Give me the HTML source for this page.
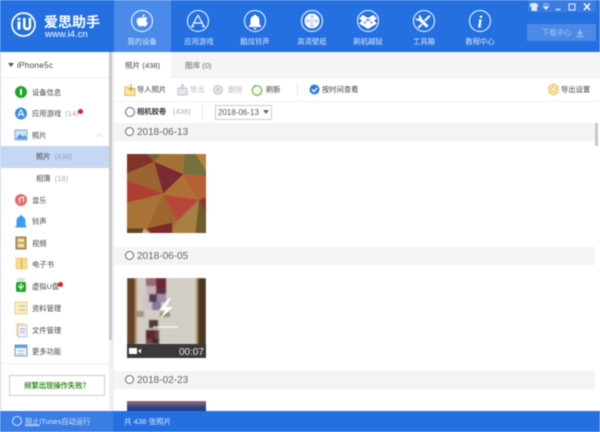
<!DOCTYPE html>
<html><head><meta charset="utf-8">
<style>
*{box-sizing:border-box}
html,body{margin:0;padding:0}
body{width:600px;height:432px;overflow:hidden;position:relative;background:#fff;font-family:"Liberation Sans","Noto Sans CJK SC",sans-serif;color:#555}
#w{position:absolute;left:0;top:0;width:600px;height:432px;overflow:hidden;filter:blur(.4px)}
#w div,#w svg{position:absolute}
.n{width:56px;text-align:center;top:35px;font-size:7.3px;line-height:13px;color:#dbe8fc;white-space:nowrap}
.c{width:22px;height:22px;top:10px;border:1.3px solid #fff;border-radius:50%}
.s{left:32px;font-size:7.3px;line-height:14px;margin-top:1px;color:#444;white-space:nowrap}
.s i{font-style:normal;color:#aaa;margin-left:4px;font-size:7.6px}
.b{font-size:7.3px;line-height:14px;top:83px;color:#444;white-space:nowrap}
.d{left:114px;width:481px;height:18px;background:#f4f4f4}
.dt{left:137px;font-size:10px;line-height:18px;color:#666}
.r{left:125px;width:9px;height:9px;border:1px solid #666;border-radius:50%;background:#fff}
</style></head><body><div id="w">
<div style="left:0;top:0;width:600px;height:52px;background:#2470e0"></div>
<div style="left:114px;top:0;width:57px;height:52px;background:#4a8ae8"></div>

<svg style="left:9px;top:10px" width="30" height="30" viewBox="0 0 30 30"><circle cx="14.500" cy="14.500" r="11.500" fill="none" stroke="#fff" stroke-width="1.700"/><path d="M8.500 11.500h3v8h-3zM8.500 8h3v2.300h-3zM14 8h2.500v8q0 1.700 1.600 1.700t1.600-1.700V8h2.500v8q0 4.300-4.100 4.300T14 16z" fill="#fff"/></svg>
<div style="left:44px;top:14px;font-size:14px;line-height:17px;font-weight:bold;color:#fff;white-space:nowrap">爱思助手</div>
<div style="left:45px;top:29px;font-size:9.500px;line-height:11px;color:#fff">www.i4.cn</div>

<div class="c" style="left:131px"></div><div class="c" style="left:187px"></div><div class="c" style="left:244px"></div><div class="c" style="left:301px"></div><div class="c" style="left:357px"></div><div class="c" style="left:413px"></div><div class="c" style="left:469px"></div>
<svg style="left:131px;top:10px" width="360" height="23" viewBox="0 0 360 23">
<path d="M11.300 7.800c1-.1 1.800-.7 2.700-.7 1 0 1.900.5 2.400 1.200-1.800 1.200-1.500 3.700.4 4.600-.5 1.400-1.700 3.600-3 3.600-.9 0-1.300-.6-2.400-.6s-1.500.6-2.400.6c-1.500 0-3.300-3-3.300-5.300 0-2.500 1.700-3.600 3.100-3.600.9 0 1.700.2 2.500.2zM11.200 7.200c0-1.500 1-2.700 2.500-2.900.1 1.600-1 2.800-2.500 2.900z" fill="#fff"/>
<path d="M67 5L61 16.500M67 5L73 16.500M62 13h10M60 16.500h3M71 16.500h3" fill="none" stroke="#fff" stroke-width="1.200"/>
<path d="M124 4.500q1 0 1.200 1.300 3.300.8 3.300 5v3.200l1.500 2v1h-12v-1l1.500-2v-3.200q0-4.200 3.300-5 .2-1.300 1.200-1.300zM122.300 18h3.400q-.4 1.500-1.700 1.500t-1.700-1.500z" fill="#fff"/>
<circle cx="181" cy="11" r="7.500" fill="#fff"/><circle cx="181" cy="11" r="2.800" fill="#dbe7fa"/><circle cx="181" cy="6.500" r="2" fill="#c6d9f7"/><circle cx="181" cy="15.500" r="2" fill="#c6d9f7"/><circle cx="176.500" cy="11" r="2" fill="#c6d9f7"/><circle cx="185.500" cy="11" r="2" fill="#c6d9f7"/>
<path d="M232 5l5 3 5-3 4 3.500-3 2 3 3-9 5.500-9-5.500 3-3-3-2z" fill="#fff"/><path d="M233 12.500h2M239.500 12.500h2M235 10h4" stroke="#2470e0" stroke-width="1.200"/>
<path d="M287.500 5q3 .5 3 3.200l7 7.500-2 2-7.500-7q-3.300.3-3.500-3l2 1.500 2-1.500zM298 5l-5 5 1.500 1.500 5-5zM291 13l-4.500 4 1.500 1.500 4-4.500z" fill="#fff"/>
<text x="349" y="17.500" font-family="Liberation Serif" font-style="italic" font-weight="bold" font-size="17" fill="#fff" text-anchor="middle">i</text>
</svg>
<div class="n" style="left:114px">我的设备</div><div class="n" style="left:171px">应用游戏</div><div class="n" style="left:227px">酷炫铃声</div><div class="n" style="left:284px">高清壁纸</div><div class="n" style="left:340px">刷机越狱</div><div class="n" style="left:396px">工具箱</div><div class="n" style="left:452px">教程中心</div>

<div style="left:528px;top:0;width:68px;height:12px;background:#3a7ce2"></div>
<svg style="left:528px;top:1px" width="68" height="12" viewBox="0 0 68 12"><path d="M2 3l2-1h3.500l2 1 1 2-1.500 1v4H3.500V6L1.500 5z" fill="#dce8fb"/><path d="M15 3h6M15.500 5.500h5L18 8.500z" stroke="#dce8fb" stroke-width=".8" fill="#dce8fb"/><path d="M27.500 8.500h5" stroke="#dce8fb" stroke-width="1.400"/><rect x="41" y="3" width="6" height="6" fill="none" stroke="#dce8fb" stroke-width="1.100"/><path d="M56 2.500l6 6.500M62 2.500l-6 6.500" stroke="#fff" stroke-width="1.500"/></svg>
<div style="left:527px;top:24px;width:69px;height:17px;background:#4c8ae6"></div>
<div style="left:542px;top:26px;font-size:7.300px;line-height:13px;color:#a9c6f2;white-space:nowrap">下载中心</div>
<svg style="left:575px;top:28px" width="10" height="10" viewBox="0 0 10 10"><path d="M5 1v5M2.500 4L5 6.500 7.500 4M1.500 8.500h7" fill="none" stroke="#a9c6f2" stroke-width="1.100"/></svg>

<div style="left:0;top:52px;width:1px;height:359px;background:#cfd6e0"></div>
<div style="left:109px;top:52px;width:5px;height:359px;background:#f0f0f0"></div>
<div style="left:109px;top:52px;width:3px;height:288px;background:#c9c9c9"></div>
<div style="left:1px;top:77px;width:108px;height:1px;background:#eee"></div>
<svg style="left:8px;top:63px" width="6" height="5"><path d="M0 0h6L3 4z" fill="#555"/></svg>
<div class="s" style="left:17px;top:57px;font-size:8.300px;letter-spacing:.2px">iPhone5c</div>

<div style="left:1px;top:146px;width:108px;height:22px;background:#c5d7f3"></div>

<svg style="left:14px;top:84px" width="20" height="276" viewBox="0 0 20 276">
<circle cx="7" cy="8" r="6" fill="#1ea52a"/><rect x="6" y="5" width="2" height="6" fill="#fff"/>
<circle cx="7" cy="29.500" r="6" fill="#3d8fdc"/><path d="M7 25.500l-3 7M7 25.500l3 7M4.500 30.500h5" stroke="#fff" stroke-width="1"/>
<rect x="1" y="46" width="12" height="10" fill="#cfe3f7" stroke="#7fb0e0"/><path d="M2 55l4-5 3 3 2-2 2 4z" fill="#4f94dc"/>
<circle cx="7" cy="116" r="6" fill="#e46a6a"/><path d="M5.500 119v-5l4-1v5" fill="none" stroke="#fff"/>
<path d="M7 131q1 0 1.500 1.500 3 1 3 5v4l1.500 2H1l1.500-2v-4q0-4 3-5Q6 131 7 131z" fill="#3b9bf0"/>
<rect x="2" y="153" width="10" height="12" fill="#c9a45c" stroke="#8a7a50"/><rect x="4" y="155" width="6" height="3" fill="#f2e2b0"/><rect x="4" y="160" width="6" height="3" fill="#f2e2b0"/>
<rect x="2" y="174" width="11" height="11" fill="#f7d98a" stroke="#f2d68a"/><path d="M7.500 174v11" stroke="#d8a93f"/>
<rect x="2" y="198" width="10" height="10" rx="2" fill="#1ea52a"/><rect x="3" y="194" width="8" height="4" fill="#cdeccf"/><path d="M7 199v7M5 201v2l2 1 2-1v-2" stroke="#fff" fill="none"/>
<rect x="1" y="218" width="12" height="12" fill="#f8ecc0" stroke="#ecd68a"/><path d="M5 222h6M5 226h6" stroke="#b9b9a0"/>
<rect x="2" y="239" width="9" height="13" fill="#f6dd95"/><rect x="4" y="241" width="9" height="12" fill="#eef0f2" stroke="#c5cbd2"/><path d="M6 245h5M6 248h5" stroke="#aab"/>
<rect x="1" y="261" width="12" height="11" fill="#eef4fb" stroke="#6b9ccc"/><rect x="1" y="261" width="12" height="3" fill="#6b9ccc"/><path d="M4 267h6M4 270h6" stroke="#6b9ccc" stroke-dasharray="1.500 1"/>
</svg>
<div class="s" style="top:85px">设备信息</div>
<div class="s" style="top:106px">应用游戏<i>(14)</i></div>
<div style="left:78px;top:109px;width:5px;height:5px;border-radius:50%;background:#d8222e"></div>
<div class="s" style="top:128px">照片</div>
<svg style="left:95px;top:133px" width="9" height="5"><path d="M1 4l3.500-3L8 4" fill="none" stroke="#ddd"/></svg>
<div class="s" style="left:36px;top:149px">照片<i style="color:#9aa6b8">(438)</i></div>
<div class="s" style="left:36px;top:171px">相簿<i>(18)</i></div>
<div class="s" style="top:193px">音乐</div>
<div class="s" style="top:214px">铃声</div>
<div class="s" style="top:236px">视频</div>
<div class="s" style="top:257px">电子书</div>
<div class="s" style="top:279px">虚拟U盘</div>
<div style="left:58px;top:282px;width:5px;height:5px;border-radius:50%;background:#d8222e"></div>
<div class="s" style="top:301px">资料管理</div>
<div class="s" style="top:323px">文件管理</div>
<div class="s" style="top:344px">更多功能</div>
<div style="left:1px;top:363px;width:108px;height:1px;background:#eee"></div>
<div style="left:9px;top:375px;width:96px;height:21px;border:1px solid #ccc;text-align:center;font-size:7.300px;line-height:20px;color:#3f8f2a;font-weight:bold;white-space:nowrap">频繁出现操作失败？</div>

<div style="left:114px;top:52px;width:486px;height:26px;background:#f5f5f5;border-bottom:1px solid #e8e8e8"></div>
<div style="left:114px;top:52px;width:57px;height:27px;background:#fff"></div>
<div class="b" style="left:125px;top:59px;font-size:7.600px">照片 (438)</div>
<div class="b" style="left:185px;top:59px;color:#666;font-size:7.600px">图库 (0)</div>

<svg style="left:124px;top:83px" width="140" height="14" viewBox="0 0 140 14">
<path d="M1 4h3l1.500 1.500H11v7H1z" fill="#fbe6a2" stroke="#e6bd55"/><path d="M7 1v6M4.800 5L7 7.500 9.200 5" fill="none" stroke="#d99a2b" stroke-width="1.200"/>
<rect x="54" y="5" width="9" height="7" fill="#e4e8ec" stroke="#bcc4cc"/><path d="M58.500 7V1.500M56.500 3.500l2-2 2 2" fill="none" stroke="#bcc4cc"/>
<circle cx="94" cy="7" r="4.500" fill="#e5e5e5" stroke="#c2c2c2"/><circle cx="94" cy="7" r="2" fill="#cfcfcf"/>
<circle cx="133" cy="7.500" r="4.800" fill="#f1f9ea" stroke="#78b84a" stroke-width="1.200"/><path d="M130 1.500l3 1.500-2.500 1.500z" fill="#78b84a"/>
</svg>
<div class="b" style="left:137px">导入照片</div>
<div class="b" style="left:190px;color:#bbb">导出</div>
<div class="b" style="left:228px;color:#bbb">删除</div>
<div class="b" style="left:266px">刷新</div>
<div style="left:297px;top:83px;width:1px;height:13px;background:#e6e6e6"></div>
<svg style="left:309px;top:84px" width="12" height="12"><circle cx="5.500" cy="5.500" r="5" fill="#2f7fd8"/><path d="M3 5.500l2 2 3-3.500" fill="none" stroke="#fff" stroke-width="1.300"/></svg>
<div class="b" style="left:322px">按时间查看</div>
<svg style="left:547px;top:83px" width="13" height="13" viewBox="0 0 13 13"><path d="M6.500 1l4.500 2.700v5.600L6.500 12 2 9.300V3.700z" fill="#f9e7a8" stroke="#e3bf58"/><circle cx="6.500" cy="6.500" r="2" fill="#fff" stroke="#e3bf58"/></svg>
<div class="b" style="left:561px">导出设置</div>
<div style="left:114px;top:101px;width:486px;height:1px;background:#f0f0f0"></div>

<div class="r" style="top:107px;width:10px;height:10px"></div>
<div class="b" style="left:137px;top:105px;font-weight:bold;color:#333">相机胶卷</div>
<div class="b" style="left:173px;top:105px;color:#aaa;font-size:7.600px">(438)</div>
<div style="left:202px;top:105px;width:1px;height:14px;background:#e6e6e6"></div>
<div style="left:215px;top:105px;width:57px;height:15px;border:1px solid #ccc;font-size:8px;line-height:13px;padding-left:2px;color:#555;white-space:nowrap">2018-06-13</div>
<svg style="left:263px;top:110px" width="6" height="5"><path d="M0 0h6L3 4z" fill="#666"/></svg>

<div class="d" style="top:123px"></div><div class="r" style="top:127px"></div><div class="dt" style="top:124px">2018-06-13</div>
<div style="left:595px;top:123px;width:3px;height:23px;background:#c9c9c9"></div>
<svg style="left:127px;top:154px;filter:saturate(.88) brightness(.93)" width="79" height="79" viewBox="0 0 236 236">
<rect width="236" height="236" fill="#b57a30"/>
<path d="M0 0H60L81 23 0 58z" fill="#96332a"/>
<path d="M60 0H110L81 23z" fill="#7d6a35"/>
<path d="M81 23L100 0H172L168 60z" fill="#b87a2e"/>
<path d="M172 0H205L236 50V65L168 60z" fill="#7f7a3c"/>
<path d="M205 0H236V50z" fill="#c98a3a"/>
<path d="M81 23L168 60 108 118z" fill="#8e2a34"/>
<path d="M0 58L81 23 108 118 0 80z" fill="#ad6a2c"/>
<path d="M0 80L108 118 0 145z" fill="#c93f32"/>
<path d="M168 60L215 137 108 122z" fill="#c4762f"/>
<path d="M168 60L236 65V130L215 137z" fill="#cf6433"/>
<path d="M215 137L236 130V175z" fill="#9a3a30"/>
<path d="M108 122L215 137 150 200z" fill="#d3493a"/>
<path d="M0 145L108 122 60 222H0z" fill="#bd7a30"/>
<path d="M108 122L150 200 60 222z" fill="#b06c2c"/>
<path d="M60 222L135 205V236H70z" fill="#8e2d28"/>
<path d="M0 222H50L45 236H0z" fill="#6e4a22"/>
<path d="M50 222L70 236H45z" fill="#e0b47a"/>
<path d="M150 200L215 137 205 236H135z" fill="#ba8838"/>
<path d="M215 137L236 175V236H205z" fill="#76642c"/>
</svg>

<div class="d" style="top:247px"></div><div class="r" style="top:251px"></div><div class="dt" style="top:248px">2018-06-05</div>
<svg style="left:127px;top:278px" width="79" height="80" viewBox="0 0 79 80">
<defs><filter id="bl"><feGaussianBlur stdDeviation=".7"/></filter></defs>
<rect width="79" height="80" fill="#d2cec5"/>
<g filter="url(#bl)">
<rect x="0" y="0" width="8" height="80" fill="#6a4226"/><rect x="8" y="0" width="2" height="80" fill="#b49a6c"/>
<rect x="71" y="0" width="8" height="80" fill="#4c3420"/><rect x="69" y="0" width="2" height="80" fill="#a89468"/>
<rect x="19" y="0" width="10" height="8" fill="#9a6a78"/><rect x="29" y="0" width="10" height="8" fill="#6a2530"/>
<rect x="19" y="8" width="10" height="8" fill="#c8aeb5"/><rect x="29" y="8" width="10" height="8" fill="#5d2e3c"/>
<rect x="14" y="16" width="8" height="8" fill="#d0c4c8"/><rect x="22" y="16" width="8" height="8" fill="#4e3c5c"/><rect x="30" y="16" width="9" height="8" fill="#a28ea8"/>
<rect x="16" y="24" width="9" height="8" fill="#cfc4c8"/><rect x="25" y="24" width="9" height="8" fill="#8a7a9a"/>
<rect x="8" y="33" width="9" height="6" fill="#a8947c"/><rect x="33" y="34" width="10" height="5" fill="#9a8e7c"/>
<rect x="22" y="42" width="9" height="8" fill="#4a3a38"/>
<rect x="19" y="52" width="9" height="9" fill="#5c2830"/><rect x="28" y="52" width="4" height="9" fill="#70404a"/>
<rect x="19" y="61" width="6" height="5" fill="#7a3a40"/><rect x="25" y="61" width="7" height="5" fill="#4a2c2c"/>
</g>
<path d="M42 20L32 32h6l-5 9 13-12h-7l5-9z" fill="#fff" opacity=".95"/>
<rect x="26" y="48" width="25" height="2" fill="#fff" opacity=".6"/>
<rect x="0" y="66" width="79" height="14" fill="#3c3a38"/>
<rect x="2" y="70" width="8" height="6" fill="#fff"/><path d="M11 73l3-2.500v5z" fill="#fff"/>
<text x="77" y="77" font-family="Liberation Sans" font-size="10" fill="#e8e8e8" text-anchor="end">00:07</text>
</svg>

<div class="d" style="top:371px"></div><div class="r" style="top:375px"></div><div class="dt" style="top:372px">2018-02-23</div>
<div style="left:127px;top:401px;width:79px;height:10px;background:linear-gradient(#a06a70,#2c4a88 60%,#1e3a78)"></div>

<div style="left:0;top:411px;width:600px;height:21px;background:#2470e0"></div>
<div style="left:0;top:411px;width:113px;height:21px;background:#3a7ee4"></div>
<div style="left:12px;top:416px;width:10px;height:10px;border:1px solid #d8e6fb;border-radius:50%"></div>
<div style="left:25px;top:415px;font-size:7.300px;line-height:13px;color:#d8e6fb;white-space:nowrap"><u>阻止</u>iTunes自动运行</div>
<div style="left:124px;top:415px;font-size:7.600px;line-height:13px;color:#d8e6fb;white-space:nowrap">共 438 张照片</div>
</div></body></html>
